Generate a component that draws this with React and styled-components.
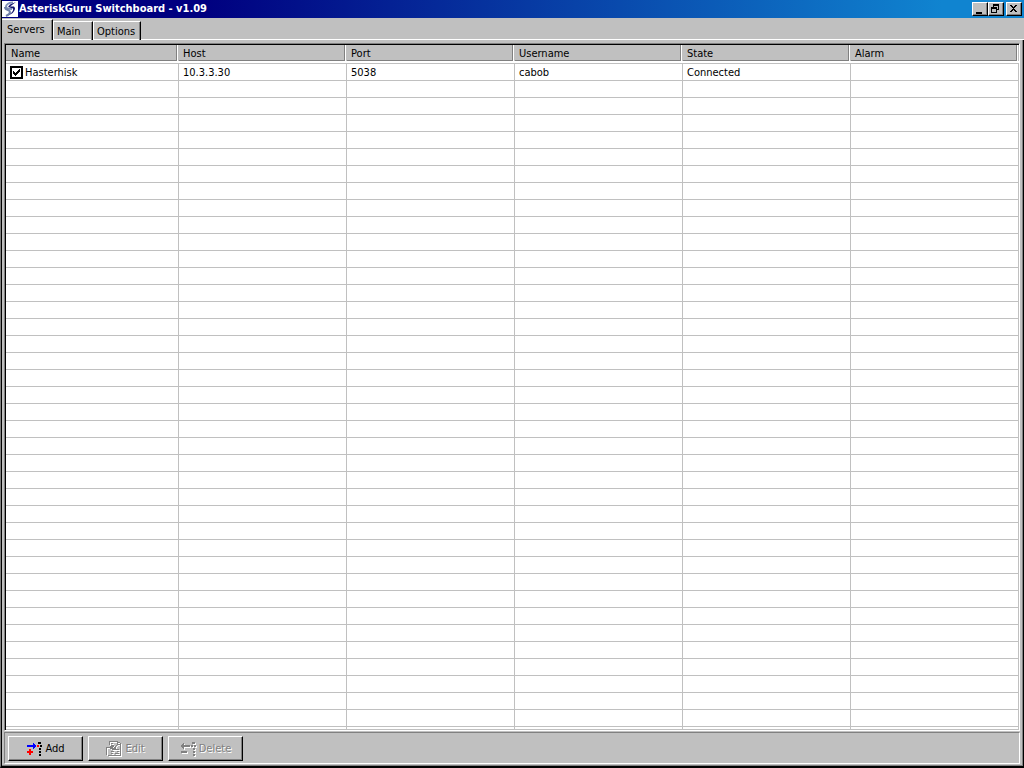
import React, {useState} from 'react';
import styled, {createGlobalStyle} from 'styled-components';

const GlobalStyle = createGlobalStyle`
    * {
        box-sizing: border-box;
    }
    body {
        margin: 0;
        background: #c0c0c0;
        color: #000;
        font-family: "DejaVu Sans Condensed", "DejaVu Sans", sans-serif;
        font-size: 11px;
        line-height: 14px;
    }
    button, input {
        margin: 0;
        padding: 0;
        font: inherit;
        color: inherit;
    }
`;

const Window = styled.div`
    display: flex;
    flex-direction: column;
    height: 100vh;
    padding-left: 1px;
    overflow: hidden;
    background: #c0c0c0;
    border-left: 1px solid #808080;
    border-bottom: 2px solid #000;
    box-shadow: inset 1px 0 #000;
`;

const TitleBar = styled.header`
    display: flex;
    align-items: center;
    flex: none;
    height: 18px;
    padding: 0 2px 0 0;
    background: linear-gradient(to right, #000080 0%, #000080 20%, #1084d0 92%, #1084d0 100%);
    color: #fff;
`;

const Title = styled.h1`
    flex: 1;
    margin: 0;
    padding-left: 1px;
    font-size: 11px;
    line-height: 16px;
    font-weight: bold;
    white-space: nowrap;
`;

const Caption = styled.div`
    display: flex;
    gap: 2px;
`;

const CaptionGroup = styled.div`
    display: flex;
`;

const CaptionButton = styled.button`
    display: flex;
    width: 16px;
    height: 14px;
    border: 1px solid;
    border-color: #fff #000 #000 #fff;
    background: #c0c0c0;
    box-shadow: inset -1px -1px #808080;
`;

const TabList = styled.div`
    display: flex;
    align-items: flex-end;
    flex: none;
    height: 22px;
    box-shadow: inset 0 -1px #fff;
`;

const Tab = styled.button`
    height: ${({$active}) => $active ? 21 : 19}px;
    padding: ${({$active}) => $active ? '0 6px 1px 5px' : '1px 5px 0 3px'};
    min-width: ${({$active}) => $active ? 51 : 40}px;
    text-align: left;
    border: 0 solid;
    border-width: 1px 1px 0 ${({$active}) => $active ? 0 : 1}px;
    border-color: #fff #000 #fff #fff;
    background: #c0c0c0;
    box-shadow: inset -1px 0 #808080${({$active}) => $active ? '' : ', inset 0 -1px #fff'};
`;

const Page = styled.main`
    display: flex;
    flex-direction: column;
    flex: 1;
    min-height: 0;
    padding: 3px 3px 2px 2px;
    border-right: 1px solid #000;
    box-shadow: inset -1px -1px #808080;
`;

const GridBox = styled.div`
    flex: 1;
    display: flex;
    min-height: 0;
    padding: 1px 0 1px 1px;
    overflow: hidden;
    border: 1px solid;
    border-color: #808080 #fff #fff #808080;
    background: #fff;
    box-shadow: inset 1px 1px #000, inset 0 -1px #c0c0c0;
`;

const GridClip = styled.div`
    flex: 1;
    overflow: hidden;
`;

const ServerTable = styled.table`
    width: 100%;
    table-layout: fixed;
    border-collapse: separate;
    border-spacing: 0;
`;

const FirstColumn = styled.col`
    width: 173px;
`;

const HeadCell = styled.th`
    height: 19px;
    padding: 2px 4px 3px;
    background: #c0c0c0;
    text-align: left;
    font-weight: normal;
    box-shadow:
        inset 0 -1px #c0c0c0,
        inset 0 -3px #fff,
        inset -1px 0 #c0c0c0,
        inset -2px 0 #fff,
        inset 0 -4px #808080,
        inset -3px 0 #808080;
    &:first-child {
        padding-left: 5px;
    }
`;

const Cell = styled.td`
    height: 17px;
    padding: 2px 4px 0;
    border: solid #c0c0c0;
    border-width: 0 1px 1px 0;
    white-space: nowrap;
`;

const CheckLabel = styled.label`
    position: relative;
    display: flex;
    align-items: flex-start;
    gap: 2px;
    svg {
        position: absolute;
        top: 0;
        left: 0;
        pointer-events: none;
    }
`;

const CheckBox = styled.input`
    appearance: none;
    width: 13px;
    height: 13px;
    border: 2px solid #000;
    background: #fff;
`;

const ButtonBar = styled.div`
    display: flex;
    flex: none;
    gap: 5px;
    height: 32px;
    margin-top: 1px;
    padding: 3px;
    border: 1px solid;
    border-color: #808080 #fff #fff #808080;
`;

const PushButton = styled.button`
    display: flex;
    align-items: center;
    justify-content: center;
    gap: 3px;
    width: 75px;
    height: 25px;
    border: 1px solid;
    border-color: #fff #000 #000 #fff;
    background: #c0c0c0;
    box-shadow: inset -1px -1px #808080;
    &:disabled {
        color: #808080;
        text-shadow: 1px 1px #fff;
    }
    &:disabled svg {
        filter: drop-shadow(1px 1px 0 #fff);
    }
`;

const LogoIcon = () => (
    <svg width="16" height="16" viewBox="0 0 16 16" aria-hidden="true">
        <rect width="16" height="16" fill="#fff"/>
        <path d="M11 1.500C7 1.500 4 3.500 4 5.500c0 2 3 2.500 6 2.500" fill="none" stroke="#8090b8" strokeWidth="2"/>
        <path d="M14 1 8 3.500 6 6l5 1.500c1 3-3 5.500-7 7.500 5-1 9-4 9-8l-1-1.500-4 0z" fill="#10106c"/>
        <path d="M3 6c0 4 5 2 5 5 0 2-2 3-4 4" fill="none" stroke="#7080a8" strokeWidth="2"/>
    </svg>
);

const MinimizeIcon = () => (
    <svg width="14" height="12" shapeRendering="crispEdges" aria-hidden="true">
        <path d="M3 9h6v2H3z"/>
    </svg>
);

const RestoreIcon = () => (
    <svg width="14" height="12" shapeRendering="crispEdges" aria-hidden="true">
        <path d="M4 1h6v6H8V6h1V3H5v1H4zM2 4h6v6H2zM3 6v3h4V6z" fillRule="evenodd"/>
    </svg>
);

const CloseIcon = () => (
    <svg width="14" height="12" shapeRendering="crispEdges" aria-hidden="true">
        <path d="M3 2h2v1h1v1h1V3h1V2h2v1H9v1H8v1H7v1h1v1h1v1h1v1H8V8H7V7H6v1H5v1H3V8h1V7h1V6h1V5H5V4H4V3H3z"/>
    </svg>
);

const CheckIcon = () => (
    <svg width="13" height="13" shapeRendering="crispEdges" aria-hidden="true">
        <path d="M3 5h1v1h1v1h1V6h1V5h1V4h1V3h1v3H9v1H8v1H7v1H6v1H5V9H4V8H3z"/>
    </svg>
);

const AddIcon = () => (
    <svg width="16" height="16" shapeRendering="crispEdges" aria-hidden="true">
        <path d="M1 4h6V2h1v1h1v1h1v2H9v1H8v1H7V6H1z" fill="#00f"/>
        <path d="M11 4h2v2h-2zM3 8h2v2h2v2H5v2H3v-2H1v-2h2z" fill="#f00"/>
        <path d="M12 1h3v2h-3zM14 4h2v2h-2zM13 7h2v2h-2zM13 10h2v2h-2zM13 13h2v2h-2z"/>
    </svg>
);

const EditIcon = () => (
    <svg width="16" height="16" shapeRendering="crispEdges" aria-hidden="true">
        <g fill="none" stroke="#808080">
            <path d="M3.500 4V.500h8l3 2v12h-9M11.500 0v3h3M5 2.500h2M6 4.500h2M8 6.500h2M10 8.500h3M11 10.500h2M9 12.500h4"/>
            <path d="M.500 6v8M1 6.500h3l2-2 1 1-2 2h4v1H6M5 10.500h3M5 12.500h2M2 14.500h4M9 6l3-3"/>
        </g>
    </svg>
);

const DeleteIcon = () => (
    <svg width="16" height="16" shapeRendering="crispEdges" aria-hidden="true">
        <path d="M1 4h1V3h1V2h1v2h6v2H4v2H3V7H2V6H1zM11 4h2v2h-2zM1 10h6v2H1zM12 1h3v2h-3zM14 4h2v2h-2zM13 7h2v2h-2zM13 10h2v2h-2zM13 13h2v2h-2z" fill="#808080"/>
    </svg>
);

const tabs = ['Servers', 'Main', 'Options'];
const columns = ['Name', 'Host', 'Port', 'Username', 'State', 'Alarm'];
const emptyRows = Array.from({length: 80}, (_, i) => i);

const ServerRow = ({server}) => {
    const [enabled, setEnabled] = useState(true);

    return (
        <tr>
            <Cell>
                <CheckLabel>
                    <CheckBox
                        type="checkbox"
                        checked={enabled}
                        onChange={() => setEnabled(!enabled)}/>
                    {enabled && <CheckIcon/>}
                    {server.name}
                </CheckLabel>
            </Cell>
            <Cell>{server.host}</Cell>
            <Cell>{server.port}</Cell>
            <Cell>{server.username}</Cell>
            <Cell>{server.state}</Cell>
            <Cell>{server.alarm}</Cell>
        </tr>
    )
}

const ServerGrid = ({servers}) => {
    return (
        <GridBox>
            <GridClip>
                <ServerTable>
                    <colgroup>
                        <FirstColumn/>
                        {columns.slice(1).map((name) => <col key={name}/>)}
                    </colgroup>
                    <thead>
                        <tr>
                            {columns.map((name) => <HeadCell key={name}>{name}</HeadCell>)}
                        </tr>
                    </thead>
                    <tbody>
                        {servers.map((server) => <ServerRow key={server.name} server={server}/>)}
                        {emptyRows.map((row) => (
                            <tr key={row}>
                                {columns.map((name) => <Cell key={name}/>)}
                            </tr>
                        ))}
                    </tbody>
                </ServerTable>
            </GridClip>
        </GridBox>
    )
}

export default function App() {
    const [active, setActive] = useState('Servers');
    const servers = [
        {name: 'Hasterhisk', host: '10.3.3.30', port: '5038', username: 'cabob', state: 'Connected', alarm: ''}
    ];

    return (
        <>
            <GlobalStyle/>
            <Window>
                <TitleBar>
                    <LogoIcon/>
                    <Title>AsteriskGuru Switchboard - v1.09</Title>
                    <Caption>
                        <CaptionGroup>
                            <CaptionButton aria-label="Minimize"><MinimizeIcon/></CaptionButton>
                            <CaptionButton aria-label="Restore"><RestoreIcon/></CaptionButton>
                        </CaptionGroup>
                        <CaptionButton aria-label="Close"><CloseIcon/></CaptionButton>
                    </Caption>
                </TitleBar>
                <TabList role="tablist">
                    {tabs.map((tab) => (
                        <Tab
                            key={tab}
                            role="tab"
                            aria-selected={tab === active}
                            $active={tab === active}
                            onClick={() => setActive(tab)}>
                            {tab}
                        </Tab>
                    ))}
                </TabList>
                <Page>
                    <ServerGrid servers={servers}/>
                    <ButtonBar>
                        <PushButton><AddIcon/>Add</PushButton>
                        <PushButton disabled><EditIcon/>Edit</PushButton>
                        <PushButton disabled><DeleteIcon/>Delete</PushButton>
                    </ButtonBar>
                </Page>
            </Window>
        </>
    );
}
